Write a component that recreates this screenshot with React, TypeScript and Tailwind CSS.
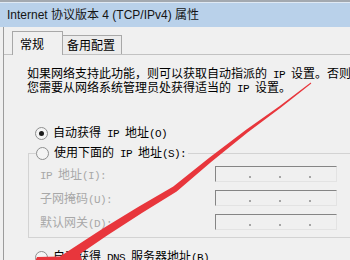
const cjk = "font-['Noto_Sans_CJK_SC',sans-serif]";

function Lat({ children }: { children: string }) {
  return <span className="font-['Liberation_Mono',monospace] text-[11px] tracking-[-0.6px]">{children}</span>;
}

function Radio({ checked = false }: { checked?: boolean }) {
  return (
    <span className="flex h-[13px] w-[13px] shrink-0 items-center justify-center rounded-full border border-[#8e8f8f] bg-[#f4f4f4]">
      {checked && <span className="h-[5px] w-[5px] rounded-full bg-[#1b1b1b]" />}
    </span>
  );
}

function IpBox() {
  return (
    <div className="h-[16px] w-[122px] border border-t-[#858585] border-l-[#858585] border-r-[#e3e3e3] border-b-[#e3e3e3] bg-[#f0f0f0]">
      <div className="flex gap-[28px] pl-[33px] pt-[9px]">
        {[0, 1, 2].map((i) => (
          <span key={i} className="h-[2px] w-[2px] bg-[#a5a5a5]" />
        ))}
      </div>
    </div>
  );
}

const fields = [
  { zh: "地址", key: "(I):", ip: true },
  { zh: "子网掩码", key: "(U):", ip: false },
  { zh: "默认网关", key: "(D):", ip: false },
];

export default function App() {
  return (
    <div className={`relative h-[260px] w-[350px] overflow-hidden bg-[#f0f0f0] text-[12px] text-black ${cjk}`}>
      {/* title bar */}
      <div className="flex h-[27px] items-center border-t-2 border-[#a3a9b0] bg-[#b9d1ea] pl-[7px] shadow-[inset_0_1px_0_#dfe9f4]">
        <span className="font-['Liberation_Sans','Noto_Sans_CJK_SC',sans-serif] text-[12px] text-[#151515] whitespace-nowrap">
          Internet 协议版本 4 (TCP/IPv4) 属性
        </span>
      </div>

      <div className="ml-[3px] border-l border-[#9c9c9c]">
        {/* tabs */}
        <div className="relative z-10 flex h-[27px] items-end pl-[8px]">
          <div className="-mb-px flex h-[24px] w-[51px] items-center border border-b-0 border-[#a8a8a8] bg-[#f0f0f0] pl-[7px]">
            常规
          </div>
          <div className="flex h-[19px] w-[59px] items-center border-t border-r border-[#a8a8a8] bg-[#ececec] pl-[4px]">
            备用配置
          </div>
        </div>

        {/* panel */}
        <div className="h-[220px] border-t border-[#c2c2c2]">
          <div className="ml-[23px] mt-[12px] whitespace-nowrap leading-[12px]">
            <div>
              如果网络支持此功能，则可以获取自动指派的<Lat> IP </Lat>设置。否则，
            </div>
            <div>
              您需要从网络系统管理员处获得适当的<Lat> IP </Lat>设置。
            </div>
          </div>

          <div className="ml-[31px] mt-[30px] flex h-[16px] items-center gap-[5px] whitespace-nowrap">
            <Radio checked />
            <span>
              自动获得<Lat> IP </Lat>地址<Lat>(O)</Lat>
            </span>
          </div>

          <fieldset className="ml-[24px] mt-[4px] w-[340px] border border-[#d3d3d3] pl-[7px] pb-[7px]">
            <legend className="flex h-[16px] items-center gap-[5px] whitespace-nowrap pr-[2px] leading-[16px]">
              <Radio />
              <span>
                使用下面的<Lat> IP </Lat>地址<Lat>(S):</Lat>
              </span>
            </legend>
            <div className="ml-[4px] grid grid-cols-[175px_122px] gap-y-[8px] pt-[5px] text-[#a8a8a8]">
              {fields.map((f) => (
                <div key={f.key} className="contents">
                  <div className="h-[16px] whitespace-pre leading-[16px]">
                    {f.ip && <Lat>{"IP "}</Lat>}
                    {f.zh}
                    <Lat>{f.key}</Lat>
                  </div>
                  <IpBox />
                </div>
              ))}
            </div>
          </fieldset>

          <div className="ml-[31px] mt-[11px] flex h-[16px] items-center gap-[5px] whitespace-nowrap">
            <Radio />
            <span>
              自动获得<Lat> DNS </Lat>服务器地址<Lat>(B)</Lat>
            </span>
          </div>
        </div>
      </div>

      {/* red annotation arrow */}
      <svg className="pointer-events-none absolute inset-0" width="350" height="260" viewBox="0 0 350 260">
        <polygon
          fill="#e8363c"
          points="311.3,83.4 280.6,107.8 247.9,132.2 211.4,161.8 176.7,191.5 141.9,213 107.1,235.4 80,254 86,272 22,290 37,257 60,256.5 72.6,248.2 102.9,228.6 138.1,207 173.3,186.5 208.6,158.2 246.1,129.8 279.4,106.2 310.7,82.6"
        />
      </svg>
    </div>
  );
}
